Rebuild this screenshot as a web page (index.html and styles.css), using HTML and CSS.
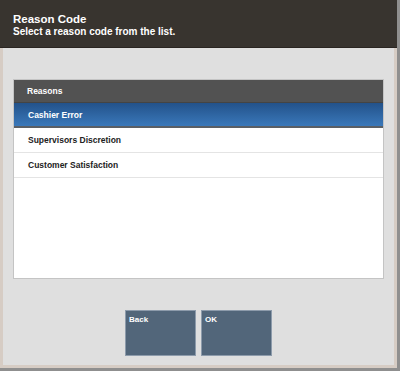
FILE: index.html
```html
<!DOCTYPE html>
<html lang="en">
<head>
    <meta charset="UTF-8">
    <title>Reason Code</title>
    <link rel="stylesheet" href="styles.css">
</head>
<body>
    <div class="window">
        <div class="title-bar">
            <div class="title">Reason Code</div>
            <div class="subtitle">Select a reason code from the list.</div>
        </div>
        <div class="content">
            <div class="list">
                <div class="list-head">Reasons</div>
                <div class="row selected">Cashier Error</div>
                <div class="row">Supervisors Discretion</div>
                <div class="row">Customer Satisfaction</div>
            </div>
            <div class="buttons">
                <button class="btn">Back</button>
                <button class="btn">OK</button>
            </div>
        </div>
    </div>
</body>
</html>
```

FILE: styles.css
```css
*{margin:0;padding:0;box-sizing:border-box;}
body{
    width:400px;height:371px;
    background:#8f8f8f;
    font-family:"Liberation Sans",Arial,sans-serif;
    font-weight:bold;
}
.window{
    width:397px;height:368px;
    display:flex;flex-direction:column;
    background:#dfdfdf;
}
.title-bar{
    height:48px;
    background:#38342f;
    border-bottom:1px solid #2a2521;
    color:#fff;
    padding:13px 0 0 13px;
}
.title{font-size:11.5px;line-height:13px;}
.subtitle{font-size:10px;line-height:12px;}
.content{
    flex:1;
    border:3px solid #d6ccc4;
    border-top:none;
    padding:31px 10px 0 10px;
}
.list{
    height:200px;
    background:#fff;
    border:1px solid #c4c4c4;
}
.list-head{
    height:23px;
    background:#525252;
    border-bottom:1px solid #444;
    color:#fff;
    font-size:8.5px;
    line-height:22px;
    padding-left:13px;
}
.row{
    height:25px;
    line-height:25px;
    font-size:8.5px;
    color:#222;
    padding-left:14px;
    border-bottom:1px solid #e4e4e4;
}
.row.selected{
    background:linear-gradient(#23528a,#3a78ba);
    border-bottom:2px solid #5a5f66;
    color:#fff;
}
.buttons{
    display:flex;
    justify-content:center;
    gap:5px;
    margin-top:31px;
}
.btn{
    width:71px;height:46px;
    background:#52667a;
    border:1px solid #8d9bab;
    color:#fff;
    font-family:inherit;font-weight:bold;
    font-size:8px;
    text-align:left;
    vertical-align:top;
    display:flex;align-items:flex-start;
    padding:4px 3px;
}
```
